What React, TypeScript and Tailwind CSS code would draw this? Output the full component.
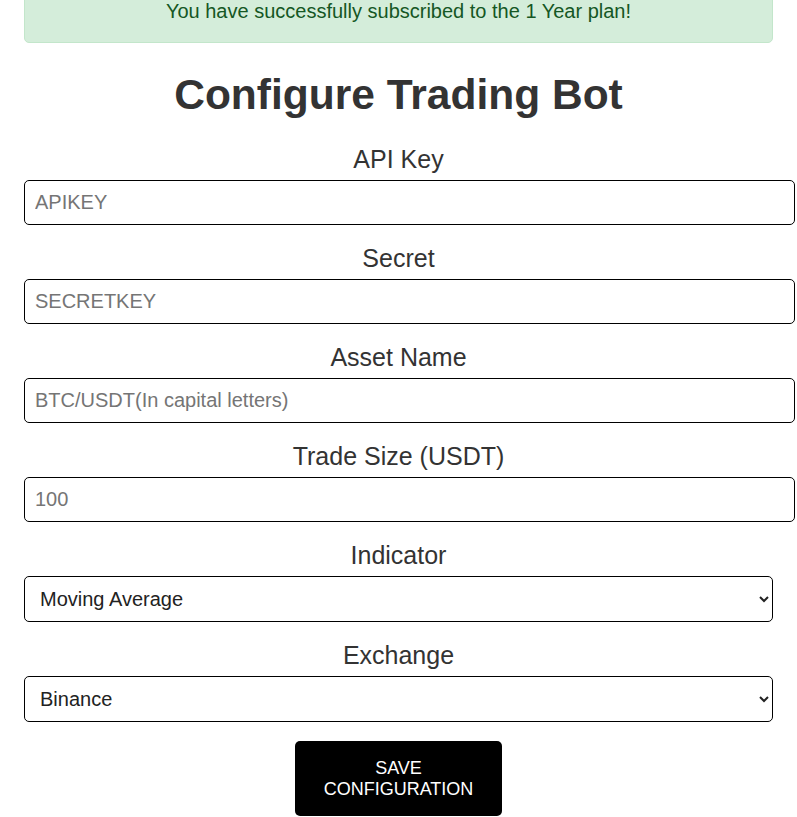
import React from "react";

function Field({ label, placeholder }: { label: string; placeholder: string }) {
  return (
    <div className="mb-[19px]">
      <label className="block text-center text-[25px] leading-[29px] text-[#333]">{label}</label>
      <input
        type="text"
        placeholder={placeholder}
        className="mt-[6px] block box-content w-full h-[23px] py-[10px] px-[10px] border border-black rounded-[5px] bg-white text-[20px] leading-[23px] text-[#222] placeholder:text-[#757575] outline-none"
      />
    </div>
  );
}

function SelectField({ label, value, options }: { label: string; value: string; options: string[] }) {
  return (
    <div className="mb-[19px]">
      <label className="block text-center text-[25px] leading-[29px] text-[#333]">{label}</label>
      <select
        defaultValue={value}
        className="mt-[6px] block w-full h-[46px] pl-[11px] pr-[8px] border border-black rounded-[5px] bg-white text-[20px] text-[#222] outline-none"
      >
        {options.map((o) => (
          <option key={o} value={o}>
            {o}
          </option>
        ))}
      </select>
    </div>
  );
}

export default function App() {
  return (
    <div className="min-h-[817px] bg-white px-[24px] font-['Liberation_Sans',Arial,sans-serif] overflow-hidden">
      <div className="mt-[-21px] h-[64px] flex items-center justify-center border border-[#c3e6cb] bg-[#d4edda] rounded-[5px] text-[20px] text-[#155724]">
        You have successfully subscribed to the 1 Year plan!
      </div>
      <h1 className="mt-[28px] text-center text-[42.5px] leading-[48px] font-bold text-[#333]">
        Configure Trading Bot
      </h1>
      <form className="mt-[26px]" onSubmit={(e) => e.preventDefault()}>
        <Field label="API Key" placeholder="APIKEY" />
        <Field label="Secret" placeholder="SECRETKEY" />
        <Field label="Asset Name" placeholder="BTC/USDT(In capital letters)" />
        <Field label="Trade Size (USDT)" placeholder="100" />
        <SelectField label="Indicator" value="Moving Average" options={["Moving Average", "RSI", "MACD"]} />
        <SelectField label="Exchange" value="Binance" options={["Binance", "Coinbase", "Kraken"]} />
        <button
          type="submit"
          className="mx-auto flex flex-col items-center justify-center w-[207px] h-[75px] bg-black text-white text-[18px] leading-[21px] rounded-[5px]"
        >
          <span>SAVE</span>
          <span>CONFIGURATION</span>
        </button>
      </form>
    </div>
  );
}
